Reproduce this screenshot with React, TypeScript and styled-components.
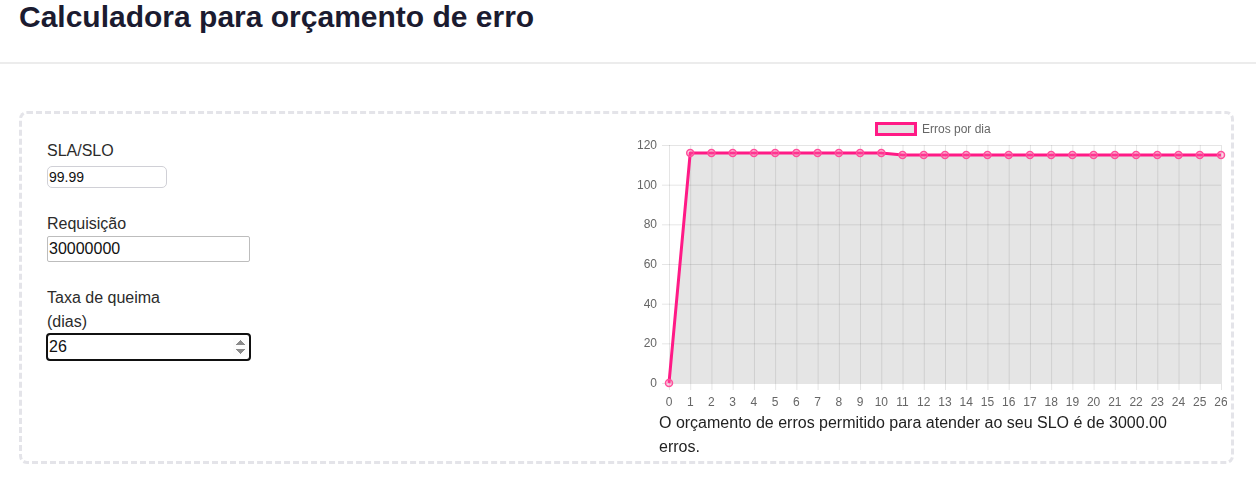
import React, { useState } from 'react';
import styled, { createGlobalStyle } from 'styled-components';

const GlobalStyle = createGlobalStyle`
    html, body {
        margin: 0;
        padding: 0;
        background: #ffffff;
        font-family: "Liberation Sans", Arial, sans-serif;
    }
`;

const Header = styled.header`
    height: 64px;
    padding: 0 19px;
    box-sizing: border-box;
    border-bottom: 2px solid #ececec;
`;

const Title = styled.h1`
    margin: 0;
    font-size: 30px;
    line-height: 34px;
    font-weight: 700;
    color: #1b1b30;
`;

const Card = styled.section`
    margin: 47px 22px 0 19px;
    border: 3px dashed #e4e4e9;
    border-radius: 8px;
    display: grid;
    grid-template-columns: 580px 600px;
    padding: 0 0 2px 25px;
`;

const Form = styled.div`
    padding-top: 25px;
    display: flex;
    flex-direction: column;
    gap: 24px;
`;

const Field = styled.label<{ $gap: number }>`
    display: flex;
    flex-direction: column;
    align-items: flex-start;
    gap: ${({ $gap }) => $gap}px;
`;

const LabelText = styled.span`
    display: block;
    max-width: 130px;
    font-size: 16px;
    line-height: 24px;
    color: #2b2b2b;
`;

const Input = styled.input<{ $small?: boolean }>`
    box-sizing: border-box;
    width: ${({ $small }) => ($small ? '120px' : '203px')};
    height: ${({ $small }) => ($small ? '22px' : '26px')};
    padding: 1px 1px;
    font-family: "Liberation Sans", Arial, sans-serif;
    font-size: ${({ $small }) => ($small ? '14px' : '16px')};
    color: #111;
    border: 1px solid ${({ $small }) => ($small ? '#d0d0d6' : '#bdbdbd')};
    border-radius: ${({ $small }) => ($small ? '5px' : '2px')};
    background: #fff;

    &:focus {
        outline: 2px solid #111;
        outline-offset: -1px;
        border-radius: 3px;
    }
`;

const ChartColumn = styled.div`
    display: flex;
    flex-direction: column;
`;

const ChartSvg = styled.svg`
    display: block;
    font-family: "Liberation Sans", Arial, sans-serif;
`;

const Result = styled.p`
    margin: 0 0 0 32px;
    max-width: 530px;
    font-size: 16px;
    line-height: 24px;
    color: #222;
`;

const PINK = '#ff1a86';
const LEFT = 42;
const RIGHT = 594;
const TOP = 31;
const BOTTOM = 269;

const Chart: React.FC<{ data: number[] }> = ({ data }) => {
    const n = data.length - 1;
    const xAt = (i: number) => LEFT + (i * (RIGHT - LEFT)) / n;
    const yAt = (v: number) => BOTTOM - (v * (BOTTOM - TOP)) / 120;
    const yTicks = [0, 20, 40, 60, 80, 100, 120];
    const line = data.map((v, i) => `${xAt(i)},${yAt(v)}`).join(' ');
    const area = `${LEFT},${BOTTOM} ${line} ${RIGHT},${BOTTOM}`;

    return (
        <ChartSvg width={600} height={297} viewBox="0 0 600 297">
            {/* legend */}
            <rect x={249.5} y={9.5} width={39} height={11} fill="#e4e4e4" stroke={PINK} strokeWidth={3} />
            <text x={295} y={18.5} fontSize={12} fill="#666">Erros por dia</text>

            {/* grid */}
            {yTicks.map((t) => (
                <g key={'y' + t}>
                    <line x1={LEFT - 7} x2={RIGHT} y1={yAt(t) + 0.5} y2={yAt(t) + 0.5} stroke="rgba(0,0,0,0.1)" />
                    <text x={30} y={yAt(t) + 4} fontSize={12} fill="#666" textAnchor="end">{t}</text>
                </g>
            ))}
            {data.map((_, i) => (
                <g key={'x' + i}>
                    <line x1={xAt(i) + 0.5} x2={xAt(i) + 0.5} y1={TOP} y2={BOTTOM + 7} stroke="rgba(0,0,0,0.1)" />
                    <text x={xAt(i)} y={292} fontSize={12} fill="#666" textAnchor="middle">{i}</text>
                </g>
            ))}

            {/* dataset */}
            <polygon points={area} fill="rgba(0,0,0,0.1)" />
            <polyline points={line} fill="none" stroke={PINK} strokeWidth={3} strokeLinejoin="round" />
            {data.map((v, i) => (
                <circle key={'p' + i} cx={xAt(i)} cy={yAt(v)} r={3.5} fill="rgba(255,110,170,0.3)" stroke="#ff4f9c" strokeWidth={1.5} />
            ))}
        </ChartSvg>
    );
};

const App: React.FC = () => {
    const [slo, setSlo] = useState('99.99');
    const [requests, setRequests] = useState('30000000');
    const [days, setDays] = useState('26');

    const budget = (Number(requests) * (100 - Number(slo))) / 100;
    const d = Math.max(1, Math.floor(Number(days)) || 1);
    const base = Math.floor(Math.round(budget) / d);
    const extra = Math.round(budget) - base * d;
    const data = [0, ...Array.from({ length: d }, (_, i) => (i < extra ? base + 1 : base))];

    return (
        <>
            <GlobalStyle />
            <Header>
                <Title>Calculadora para orçamento de erro</Title>
            </Header>
            <Card>
                <Form>
                    <Field $gap={3}>
                        <LabelText>SLA/SLO</LabelText>
                        <Input $small value={slo} onChange={(e) => setSlo(e.target.value)} />
                    </Field>
                    <Field $gap={0}>
                        <LabelText>Requisição</LabelText>
                        <Input value={requests} onChange={(e) => setRequests(e.target.value)} />
                    </Field>
                    <Field $gap={0}>
                        <LabelText>Taxa de queima (dias)</LabelText>
                        <Input type="number" autoFocus value={days} onChange={(e) => setDays(e.target.value)} />
                    </Field>
                </Form>
                <ChartColumn>
                    <Chart data={data} />
                    <Result>
                        O orçamento de erros permitido para atender ao seu SLO é de {budget.toFixed(2)} erros.
                    </Result>
                </ChartColumn>
            </Card>
        </>
    );
};

export default App;
